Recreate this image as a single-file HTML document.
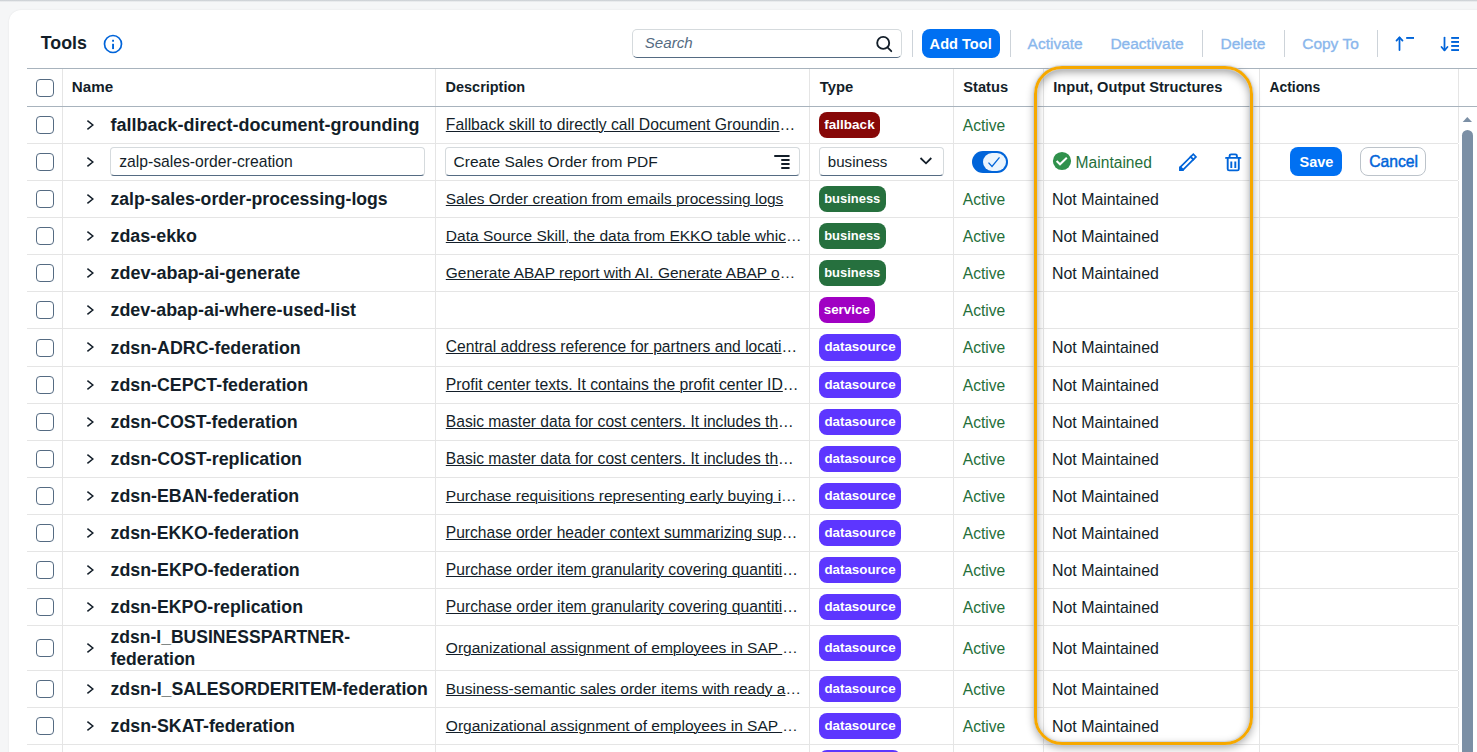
<!DOCTYPE html>
<html><head><meta charset="utf-8"><title>Tools</title>
<style>
*{box-sizing:border-box;margin:0;padding:0}
html,body{width:1477px;height:752px;overflow:hidden;background:#f5f6f7;font-family:"Liberation Sans",sans-serif;color:#131e29}
.abs{position:absolute}
.t{position:absolute;white-space:nowrap;line-height:1}
.topsh{position:absolute;left:0;top:0;width:1477px;height:2px;background:linear-gradient(#c3c8cd,rgba(245,246,247,0))}
.card{position:absolute;left:9px;top:10px;width:1500px;height:800px;background:#fff;border-radius:12px;box-shadow:0 0 2px rgba(0,0,0,.08)}
.hl{position:absolute;height:1px;background:#a8b3bd}
.rl{position:absolute;height:1px;background:#e5e5e5}
.vl{position:absolute;width:1px;background:#e5e5e5}
.cb{position:absolute;left:36px;width:18px;height:18px;border:1.25px solid #556b82;border-radius:4px;background:#fff}
.chev{position:absolute;left:85px;width:10px;height:12px}
.nm2{position:absolute;left:110.5px;font-weight:bold;line-height:22px;white-space:nowrap}
.b{font-weight:bold}
.desc u{text-decoration:underline;text-decoration-thickness:1px;text-underline-offset:1px}
.badge{position:absolute;left:819px;border-radius:8px}
.tb{color:#8ab7ec;-webkit-text-stroke:0.35px #8ab7ec}
.sep{position:absolute;top:30px;width:1px;height:27px;background:#cdd3d9}
.inp{position:absolute;border:1px solid #d5dadd;border-bottom:1px solid #556b82;border-radius:4px;background:#fff}
</style></head><body>
<div class="topsh"></div>
<div class="card"></div>
<div class="t" style="left:40.8px;top:35px;font-size:17.8px;font-weight:bold">Tools</div>
<svg class="abs" style="left:103px;top:34px" width="20" height="20" viewBox="0 0 20 20"><circle cx="10" cy="10" r="8.5" fill="none" stroke="#0064d9" stroke-width="1.7"/><rect x="9.1" y="5.8" width="1.9" height="1.9" fill="#0064d9"/><rect x="9.1" y="9.8" width="1.9" height="5.3" fill="#0064d9"/></svg>
<div class="inp" style="left:631.9px;top:29.2px;width:270px;height:28.7px;border-radius:5px"></div>
<div class="t" style="left:644.8px;top:35px;font-size:15.1px;font-style:italic;color:#556b82">Search</div>
<svg class="abs" style="left:872px;top:32px" width="24" height="24" viewBox="0 0 24 24"><circle cx="11.2" cy="10.9" r="6" fill="none" stroke="#131e29" stroke-width="1.85"/><path d="M15.5 15.4 L19.3 19.2" stroke="#131e29" stroke-width="1.8" stroke-linecap="round"/></svg>
<div class="sep" style="left:912px"></div>
<div class="abs" style="left:922px;top:29px;width:78px;height:29px;background:#0070f2;border-radius:8px"></div>
<div class="t" style="left:929.6px;top:37px;font-size:14.6px;font-weight:bold;color:#fff">Add Tool</div>
<div class="sep" style="left:1009.5px"></div>
<div class="t tb" style="left:1027.6px;top:36px;font-size:15.5px;">Activate</div>
<div class="t tb" style="left:1110.4px;top:36px;font-size:15.5px;">Deactivate</div>
<div class="sep" style="left:1202px"></div>
<div class="t tb" style="left:1220.5px;top:36px;font-size:15.5px;">Delete</div>
<div class="sep" style="left:1284px"></div>
<div class="t tb" style="left:1302.2px;top:36px;font-size:15.5px;">Copy To</div>
<div class="sep" style="left:1377px"></div>
<svg class="abs" style="left:1390px;top:30px" width="30" height="26" viewBox="1390 30 30 26"><path d="M1399.5 37.5 V50" stroke="#0064d9" stroke-width="1.75" stroke-linecap="round"/><path d="M1396.5 40.6 L1399.5 37.3 L1402.5 40.6" fill="none" stroke="#0064d9" stroke-width="1.75" stroke-linecap="round" stroke-linejoin="round"/><rect x="1406.2" y="37" width="7.8" height="1.9" fill="#0064d9"/></svg>
<svg class="abs" style="left:1436px;top:30px" width="30" height="26" viewBox="1436 30 30 26"><path d="M1444.5 37.5 V50" stroke="#0064d9" stroke-width="1.75" stroke-linecap="round"/><path d="M1441.5 47 L1444.5 50.3 L1447.5 47" fill="none" stroke="#0064d9" stroke-width="1.75" stroke-linecap="round" stroke-linejoin="round"/><rect x="1451.2" y="37" width="7.8" height="1.9" fill="#0064d9"/><rect x="1451.2" y="41" width="7.8" height="1.9" fill="#0064d9"/><rect x="1451.2" y="45" width="7.8" height="1.9" fill="#0064d9"/><rect x="1451.2" y="49.1" width="7.8" height="1.9" fill="#0064d9"/></svg>
<div class="hl" style="left:27px;top:68px;width:1450px"></div>
<div class="hl" style="left:27px;top:106px;width:1450px"></div>
<div class="vl" style="left:62px;top:69px;height:37px"></div>
<div class="vl" style="left:435px;top:69px;height:37px"></div>
<div class="vl" style="left:809px;top:69px;height:37px"></div>
<div class="vl" style="left:953px;top:69px;height:37px"></div>
<div class="vl" style="left:1043px;top:69px;height:37px"></div>
<div class="vl" style="left:1259px;top:69px;height:37px"></div>
<div class="vl" style="left:1458px;top:69px;height:37px"></div>
<div class="cb" style="top:79px"></div>
<div class="t" style="left:71.8px;top:79px;font-size:15.2px;font-weight:bold">Name</div>
<div class="t" style="left:445.6px;top:80px;font-size:14.46px;font-weight:bold">Description</div>
<div class="t" style="left:819.8px;top:80px;font-size:14.8px;font-weight:bold">Type</div>
<div class="t" style="left:963.3px;top:80px;font-size:14.65px;font-weight:bold">Status</div>
<div class="t" style="left:1053.2px;top:80px;font-size:14.65px;font-weight:bold">Input, Output Structures</div>
<div class="t" style="left:1269.4px;top:81px;font-size:13.9px;font-weight:bold">Actions</div>
<div class="rl" style="left:27px;top:143px;width:1431px"></div>
<div class="vl" style="left:62px;top:107px;height:36px"></div>
<div class="vl" style="left:435px;top:107px;height:36px"></div>
<div class="vl" style="left:809px;top:107px;height:36px"></div>
<div class="vl" style="left:953px;top:107px;height:36px"></div>
<div class="vl" style="left:1043px;top:107px;height:36px"></div>
<div class="vl" style="left:1259px;top:107px;height:36px"></div>
<div class="vl" style="left:1458px;top:107px;height:36px"></div>
<div class="cb" style="top:116.0px"></div>
<svg class="chev" style="top:118.5px" width="10" height="12" viewBox="0 0 10 12"><path d="M2.4 1.7 L7.8 6 L2.4 10.3" fill="none" stroke="#131e29" stroke-width="1.5"/></svg>
<div class="t" style="left:110.5px;top:116px;font-size:18.01182px;font-weight:bold">fallback-direct-document-grounding</div>
<div class="t desc" style="left:445.8px;top:117px;font-size:15.731100000000001px;"><u>Fallback skill to directly call Document Groundin</u>…</div>
<div class="t" style="left:962.8px;top:118px;font-size:15.6px;color:#256f3a">Active</div>
<div class="badge" style="top:111.6px;width:61px;height:26.5px;background:#870808"></div>
<div class="t" style="left:819px;width:61px;text-align:center;top:118px;font-size:13.5px;font-weight:bold;color:#fff">fallback</div>
<div class="rl" style="left:27px;top:180px;width:1431px"></div>
<div class="vl" style="left:62px;top:144px;height:36px"></div>
<div class="vl" style="left:435px;top:144px;height:36px"></div>
<div class="vl" style="left:809px;top:144px;height:36px"></div>
<div class="vl" style="left:953px;top:144px;height:36px"></div>
<div class="vl" style="left:1043px;top:144px;height:36px"></div>
<div class="vl" style="left:1259px;top:144px;height:36px"></div>
<div class="vl" style="left:1458px;top:144px;height:36px"></div>
<div class="cb" style="top:153.0px"></div>
<svg class="chev" style="top:155.5px" width="10" height="12" viewBox="0 0 10 12"><path d="M2.4 1.7 L7.8 6 L2.4 10.3" fill="none" stroke="#131e29" stroke-width="1.5"/></svg>
<div class="inp" style="left:110.4px;top:147.4px;width:315px;height:28.3px"></div>
<div class="t" style="left:119.2px;top:154px;font-size:15.7px;">zalp-sales-order-creation</div>
<div class="inp" style="left:445.3px;top:147.4px;width:354.5px;height:28.3px"></div>
<div class="t" style="left:453.6px;top:154px;font-size:15.5px;">Create Sales Order from PDF</div>
<svg class="abs" style="left:772px;top:153.0px" width="20" height="18" viewBox="0 0 20 18"><rect x="2" y="2" width="15.8" height="2" rx="1" fill="#131e29"/><rect x="9" y="6" width="8.8" height="2" rx="1" fill="#131e29"/><rect x="9" y="10" width="8.8" height="2" rx="1" fill="#131e29"/><rect x="9" y="14" width="8.8" height="2" rx="1" fill="#131e29"/></svg>
<div class="inp" style="left:819.3px;top:147.4px;width:124.5px;height:28.3px"></div>
<div class="t" style="left:827.8px;top:154px;font-size:15.1px;">business</div>
<svg class="abs" style="left:918px;top:156.0px" width="16" height="10" viewBox="0 0 16 10"><path d="M2.5 2 L8 7.3 L13.3 2" fill="none" stroke="#131e29" stroke-width="1.8"/></svg>
<svg class="abs" style="left:972px;top:151.0px" width="36" height="22" viewBox="0 0 36 22"><rect x="0" y="0" width="36" height="22" rx="11" fill="#0064d9"/><rect x="11" y="2" width="23" height="18" rx="9" fill="#ebf5fe"/><path d="M16.5 11.6 L20 15.4 L27.5 6.4" fill="none" stroke="#0064d9" stroke-width="1.3"/></svg>
<svg class="abs" style="left:1052px;top:151.0px" width="20" height="20" viewBox="0 0 20 20"><circle cx="10" cy="10" r="9.1" fill="#30914c"/><path d="M4.6 10.1 L8 13.3 L14.8 6.8" fill="none" stroke="#fff" stroke-width="2"/></svg>
<div class="t" style="left:1075.6px;top:155px;font-size:15.6px;color:#256f3a">Maintained</div>
<svg class="abs" style="left:1170px;top:148px;overflow:visible" width="34" height="28" viewBox="1170 148 34 28"><g transform="translate(1195.25 154.95) rotate(135)"><path d="M0.85 -1.9 L19.6 -1.9 L21.5 0 L19.6 1.9 L0.85 1.9 Z" fill="none" stroke="#0064d9" stroke-width="1.7"/><path d="M4.6 -2.75 V2.75" stroke="#0064d9" stroke-width="1.8"/><path d="M18.2 -2.75 L19.85 -2.75 L22.6 0 L19.85 2.75 L18.2 2.75 Z" fill="#0064d9"/></g></svg>
<svg class="abs" style="left:1224px;top:152.0px" width="18" height="20" viewBox="0 0 18 20"><path d="M2 5.9 H16.4" stroke="#0064d9" stroke-width="1.9" stroke-linecap="round"/><path d="M5.6 5.6 V3.8 Q5.6 2.4 7.1 2.4 H11.4 Q12.9 2.4 12.9 3.8 V5.6" fill="none" stroke="#0064d9" stroke-width="1.9"/><path d="M3.7 5.9 V16.9 Q3.7 18.4 5.2 18.4 H13.3 Q14.8 18.4 14.8 16.9 V5.9" fill="none" stroke="#0064d9" stroke-width="1.9"/><path d="M7.3 9.6 V15.9 M11.3 9.6 V15.9" stroke="#0064d9" stroke-width="1.9"/></svg>
<div class="abs" style="left:1290px;top:147px;width:52px;height:29px;background:#0070f2;border-radius:8px"></div>
<div class="t" style="left:1299.5px;top:155px;font-size:14.5px;font-weight:bold;color:#fff">Save</div>
<div class="abs" style="left:1360px;top:147px;width:66px;height:29px;border:1px solid #bcc3ca;border-radius:8px;background:#fff"></div>
<div class="t" style="left:1369.2px;top:154px;font-size:15.7px;color:#0064d9;-webkit-text-stroke:0.45px #0064d9">Cancel</div>
<div class="rl" style="left:27px;top:217px;width:1431px"></div>
<div class="vl" style="left:62px;top:181px;height:36px"></div>
<div class="vl" style="left:435px;top:181px;height:36px"></div>
<div class="vl" style="left:809px;top:181px;height:36px"></div>
<div class="vl" style="left:953px;top:181px;height:36px"></div>
<div class="vl" style="left:1043px;top:181px;height:36px"></div>
<div class="vl" style="left:1259px;top:181px;height:36px"></div>
<div class="vl" style="left:1458px;top:181px;height:36px"></div>
<div class="cb" style="top:190.0px"></div>
<svg class="chev" style="top:192.5px" width="10" height="12" viewBox="0 0 10 12"><path d="M2.4 1.7 L7.8 6 L2.4 10.3" fill="none" stroke="#131e29" stroke-width="1.5"/></svg>
<div class="t" style="left:110.5px;top:191px;font-size:17.6398px;font-weight:bold">zalp-sales-order-processing-logs</div>
<div class="t desc" style="left:445.8px;top:191px;font-size:15.469299999999999px;"><u>Sales Order creation from emails processing logs</u></div>
<div class="t" style="left:962.8px;top:192px;font-size:15.6px;color:#256f3a">Active</div>
<div class="t" style="left:1052px;top:192px;font-size:15.9px;">Not Maintained</div>
<div class="badge" style="top:185.6px;width:66.5px;height:26.5px;background:#26703e"></div>
<div class="t" style="left:819px;width:66.5px;text-align:center;top:193px;font-size:12.96px;font-weight:bold;color:#fff">business</div>
<div class="rl" style="left:27px;top:254px;width:1431px"></div>
<div class="vl" style="left:62px;top:218px;height:36px"></div>
<div class="vl" style="left:435px;top:218px;height:36px"></div>
<div class="vl" style="left:809px;top:218px;height:36px"></div>
<div class="vl" style="left:953px;top:218px;height:36px"></div>
<div class="vl" style="left:1043px;top:218px;height:36px"></div>
<div class="vl" style="left:1259px;top:218px;height:36px"></div>
<div class="vl" style="left:1458px;top:218px;height:36px"></div>
<div class="cb" style="top:227.0px"></div>
<svg class="chev" style="top:229.5px" width="10" height="12" viewBox="0 0 10 12"><path d="M2.4 1.7 L7.8 6 L2.4 10.3" fill="none" stroke="#131e29" stroke-width="1.5"/></svg>
<div class="t" style="left:110.5px;top:228px;font-size:17.88544px;font-weight:bold">zdas-ekko</div>
<div class="t desc" style="left:445.8px;top:228px;font-size:15.540140000000003px;"><u>Data Source Skill, the data from EKKO table whic</u>…</div>
<div class="t" style="left:962.8px;top:229px;font-size:15.6px;color:#256f3a">Active</div>
<div class="t" style="left:1052px;top:229px;font-size:15.9px;">Not Maintained</div>
<div class="badge" style="top:222.6px;width:66.5px;height:26.5px;background:#26703e"></div>
<div class="t" style="left:819px;width:66.5px;text-align:center;top:230px;font-size:12.96px;font-weight:bold;color:#fff">business</div>
<div class="rl" style="left:27px;top:291px;width:1431px"></div>
<div class="vl" style="left:62px;top:255px;height:36px"></div>
<div class="vl" style="left:435px;top:255px;height:36px"></div>
<div class="vl" style="left:809px;top:255px;height:36px"></div>
<div class="vl" style="left:953px;top:255px;height:36px"></div>
<div class="vl" style="left:1043px;top:255px;height:36px"></div>
<div class="vl" style="left:1259px;top:255px;height:36px"></div>
<div class="vl" style="left:1458px;top:255px;height:36px"></div>
<div class="cb" style="top:264.0px"></div>
<svg class="chev" style="top:266.5px" width="10" height="12" viewBox="0 0 10 12"><path d="M2.4 1.7 L7.8 6 L2.4 10.3" fill="none" stroke="#131e29" stroke-width="1.5"/></svg>
<div class="t" style="left:110.5px;top:265px;font-size:17.97266px;font-weight:bold">zdev-abap-ai-generate</div>
<div class="t desc" style="left:445.8px;top:265px;font-size:15.484700000000002px;"><u>Generate ABAP report with AI. Generate ABAP o</u>…</div>
<div class="t" style="left:962.8px;top:266px;font-size:15.6px;color:#256f3a">Active</div>
<div class="t" style="left:1052px;top:266px;font-size:15.9px;">Not Maintained</div>
<div class="badge" style="top:259.6px;width:66.5px;height:26.5px;background:#26703e"></div>
<div class="t" style="left:819px;width:66.5px;text-align:center;top:267px;font-size:12.96px;font-weight:bold;color:#fff">business</div>
<div class="rl" style="left:27px;top:328px;width:1431px"></div>
<div class="vl" style="left:62px;top:292px;height:36px"></div>
<div class="vl" style="left:435px;top:292px;height:36px"></div>
<div class="vl" style="left:809px;top:292px;height:36px"></div>
<div class="vl" style="left:953px;top:292px;height:36px"></div>
<div class="vl" style="left:1043px;top:292px;height:36px"></div>
<div class="vl" style="left:1259px;top:292px;height:36px"></div>
<div class="vl" style="left:1458px;top:292px;height:36px"></div>
<div class="cb" style="top:301.0px"></div>
<svg class="chev" style="top:303.5px" width="10" height="12" viewBox="0 0 10 12"><path d="M2.4 1.7 L7.8 6 L2.4 10.3" fill="none" stroke="#131e29" stroke-width="1.5"/></svg>
<div class="t" style="left:110.5px;top:302px;font-size:17.90324px;font-weight:bold">zdev-abap-ai-where-used-list</div>
<div class="t" style="left:962.8px;top:303px;font-size:15.6px;color:#256f3a">Active</div>
<div class="badge" style="top:296.6px;width:55.6px;height:26.5px;background:#a000c3"></div>
<div class="t" style="left:819px;width:55.6px;text-align:center;top:303px;font-size:13.4px;font-weight:bold;color:#fff">service</div>
<div class="rl" style="left:27px;top:366px;width:1431px"></div>
<div class="vl" style="left:62px;top:329px;height:37px"></div>
<div class="vl" style="left:435px;top:329px;height:37px"></div>
<div class="vl" style="left:809px;top:329px;height:37px"></div>
<div class="vl" style="left:953px;top:329px;height:37px"></div>
<div class="vl" style="left:1043px;top:329px;height:37px"></div>
<div class="vl" style="left:1259px;top:329px;height:37px"></div>
<div class="vl" style="left:1458px;top:329px;height:37px"></div>
<div class="cb" style="top:338.5px"></div>
<svg class="chev" style="top:341.0px" width="10" height="12" viewBox="0 0 10 12"><path d="M2.4 1.7 L7.8 6 L2.4 10.3" fill="none" stroke="#131e29" stroke-width="1.5"/></svg>
<div class="t" style="left:110.5px;top:340px;font-size:17.84806px;font-weight:bold">zdsn-ADRC-federation</div>
<div class="t desc" style="left:445.8px;top:339px;font-size:15.610980000000001px;"><u>Central address reference for partners and locati</u>…</div>
<div class="t" style="left:962.8px;top:340px;font-size:15.6px;color:#256f3a">Active</div>
<div class="t" style="left:1052px;top:340px;font-size:15.9px;">Not Maintained</div>
<div class="badge" style="top:334.1px;width:82px;height:26.5px;background:#5d36ff"></div>
<div class="t" style="left:819px;width:82px;text-align:center;top:340px;font-size:13.34px;font-weight:bold;color:#fff">datasource</div>
<div class="rl" style="left:27px;top:403px;width:1431px"></div>
<div class="vl" style="left:62px;top:367px;height:36px"></div>
<div class="vl" style="left:435px;top:367px;height:36px"></div>
<div class="vl" style="left:809px;top:367px;height:36px"></div>
<div class="vl" style="left:953px;top:367px;height:36px"></div>
<div class="vl" style="left:1043px;top:367px;height:36px"></div>
<div class="vl" style="left:1259px;top:367px;height:36px"></div>
<div class="vl" style="left:1458px;top:367px;height:36px"></div>
<div class="cb" style="top:376.0px"></div>
<svg class="chev" style="top:378.5px" width="10" height="12" viewBox="0 0 10 12"><path d="M2.4 1.7 L7.8 6 L2.4 10.3" fill="none" stroke="#131e29" stroke-width="1.5"/></svg>
<div class="t" style="left:110.5px;top:377px;font-size:17.8089px;font-weight:bold">zdsn-CEPCT-federation</div>
<div class="t desc" style="left:445.8px;top:377px;font-size:15.75574px;"><u>Profit center texts. It contains the profit center ID</u>…</div>
<div class="t" style="left:962.8px;top:378px;font-size:15.6px;color:#256f3a">Active</div>
<div class="t" style="left:1052px;top:378px;font-size:15.9px;">Not Maintained</div>
<div class="badge" style="top:371.6px;width:82px;height:26.5px;background:#5d36ff"></div>
<div class="t" style="left:819px;width:82px;text-align:center;top:378px;font-size:13.34px;font-weight:bold;color:#fff">datasource</div>
<div class="rl" style="left:27px;top:440px;width:1431px"></div>
<div class="vl" style="left:62px;top:404px;height:36px"></div>
<div class="vl" style="left:435px;top:404px;height:36px"></div>
<div class="vl" style="left:809px;top:404px;height:36px"></div>
<div class="vl" style="left:953px;top:404px;height:36px"></div>
<div class="vl" style="left:1043px;top:404px;height:36px"></div>
<div class="vl" style="left:1259px;top:404px;height:36px"></div>
<div class="vl" style="left:1458px;top:404px;height:36px"></div>
<div class="cb" style="top:413.0px"></div>
<svg class="chev" style="top:415.5px" width="10" height="12" viewBox="0 0 10 12"><path d="M2.4 1.7 L7.8 6 L2.4 10.3" fill="none" stroke="#131e29" stroke-width="1.5"/></svg>
<div class="t" style="left:110.5px;top:414px;font-size:17.84806px;font-weight:bold">zdsn-COST-federation</div>
<div class="t desc" style="left:445.8px;top:414px;font-size:15.612520000000002px;"><u>Basic master data for cost centers. It includes th</u>…</div>
<div class="t" style="left:962.8px;top:415px;font-size:15.6px;color:#256f3a">Active</div>
<div class="t" style="left:1052px;top:415px;font-size:15.9px;">Not Maintained</div>
<div class="badge" style="top:408.6px;width:82px;height:26.5px;background:#5d36ff"></div>
<div class="t" style="left:819px;width:82px;text-align:center;top:415px;font-size:13.34px;font-weight:bold;color:#fff">datasource</div>
<div class="rl" style="left:27px;top:477px;width:1431px"></div>
<div class="vl" style="left:62px;top:441px;height:36px"></div>
<div class="vl" style="left:435px;top:441px;height:36px"></div>
<div class="vl" style="left:809px;top:441px;height:36px"></div>
<div class="vl" style="left:953px;top:441px;height:36px"></div>
<div class="vl" style="left:1043px;top:441px;height:36px"></div>
<div class="vl" style="left:1259px;top:441px;height:36px"></div>
<div class="vl" style="left:1458px;top:441px;height:36px"></div>
<div class="cb" style="top:450.0px"></div>
<svg class="chev" style="top:452.5px" width="10" height="12" viewBox="0 0 10 12"><path d="M2.4 1.7 L7.8 6 L2.4 10.3" fill="none" stroke="#131e29" stroke-width="1.5"/></svg>
<div class="t" style="left:110.5px;top:451px;font-size:17.86586px;font-weight:bold">zdsn-COST-replication</div>
<div class="t desc" style="left:445.8px;top:451px;font-size:15.612520000000002px;"><u>Basic master data for cost centers. It includes th</u>…</div>
<div class="t" style="left:962.8px;top:452px;font-size:15.6px;color:#256f3a">Active</div>
<div class="t" style="left:1052px;top:452px;font-size:15.9px;">Not Maintained</div>
<div class="badge" style="top:445.6px;width:82px;height:26.5px;background:#5d36ff"></div>
<div class="t" style="left:819px;width:82px;text-align:center;top:452px;font-size:13.34px;font-weight:bold;color:#fff">datasource</div>
<div class="rl" style="left:27px;top:514px;width:1431px"></div>
<div class="vl" style="left:62px;top:478px;height:36px"></div>
<div class="vl" style="left:435px;top:478px;height:36px"></div>
<div class="vl" style="left:809px;top:478px;height:36px"></div>
<div class="vl" style="left:953px;top:478px;height:36px"></div>
<div class="vl" style="left:1043px;top:478px;height:36px"></div>
<div class="vl" style="left:1259px;top:478px;height:36px"></div>
<div class="vl" style="left:1458px;top:478px;height:36px"></div>
<div class="cb" style="top:487.0px"></div>
<svg class="chev" style="top:489.5px" width="10" height="12" viewBox="0 0 10 12"><path d="M2.4 1.7 L7.8 6 L2.4 10.3" fill="none" stroke="#131e29" stroke-width="1.5"/></svg>
<div class="t" style="left:110.5px;top:488px;font-size:17.7911px;font-weight:bold">zdsn-EBAN-federation</div>
<div class="t desc" style="left:445.8px;top:488px;font-size:15.56016px;"><u>Purchase requisitions representing early buying i</u>…</div>
<div class="t" style="left:962.8px;top:489px;font-size:15.6px;color:#256f3a">Active</div>
<div class="t" style="left:1052px;top:489px;font-size:15.9px;">Not Maintained</div>
<div class="badge" style="top:482.6px;width:82px;height:26.5px;background:#5d36ff"></div>
<div class="t" style="left:819px;width:82px;text-align:center;top:489px;font-size:13.34px;font-weight:bold;color:#fff">datasource</div>
<div class="rl" style="left:27px;top:551px;width:1431px"></div>
<div class="vl" style="left:62px;top:515px;height:36px"></div>
<div class="vl" style="left:435px;top:515px;height:36px"></div>
<div class="vl" style="left:809px;top:515px;height:36px"></div>
<div class="vl" style="left:953px;top:515px;height:36px"></div>
<div class="vl" style="left:1043px;top:515px;height:36px"></div>
<div class="vl" style="left:1259px;top:515px;height:36px"></div>
<div class="vl" style="left:1458px;top:515px;height:36px"></div>
<div class="cb" style="top:524.0px"></div>
<svg class="chev" style="top:526.5px" width="10" height="12" viewBox="0 0 10 12"><path d="M2.4 1.7 L7.8 6 L2.4 10.3" fill="none" stroke="#131e29" stroke-width="1.5"/></svg>
<div class="t" style="left:110.5px;top:525px;font-size:17.69498px;font-weight:bold">zdsn-EKKO-federation</div>
<div class="t desc" style="left:445.8px;top:525px;font-size:15.5925px;"><u>Purchase order header context summarizing sup</u>…</div>
<div class="t" style="left:962.8px;top:526px;font-size:15.6px;color:#256f3a">Active</div>
<div class="t" style="left:1052px;top:526px;font-size:15.9px;">Not Maintained</div>
<div class="badge" style="top:519.6px;width:82px;height:26.5px;background:#5d36ff"></div>
<div class="t" style="left:819px;width:82px;text-align:center;top:526px;font-size:13.34px;font-weight:bold;color:#fff">datasource</div>
<div class="rl" style="left:27px;top:588px;width:1431px"></div>
<div class="vl" style="left:62px;top:552px;height:36px"></div>
<div class="vl" style="left:435px;top:552px;height:36px"></div>
<div class="vl" style="left:809px;top:552px;height:36px"></div>
<div class="vl" style="left:953px;top:552px;height:36px"></div>
<div class="vl" style="left:1043px;top:552px;height:36px"></div>
<div class="vl" style="left:1259px;top:552px;height:36px"></div>
<div class="vl" style="left:1458px;top:552px;height:36px"></div>
<div class="cb" style="top:561.0px"></div>
<svg class="chev" style="top:563.5px" width="10" height="12" viewBox="0 0 10 12"><path d="M2.4 1.7 L7.8 6 L2.4 10.3" fill="none" stroke="#131e29" stroke-width="1.5"/></svg>
<div class="t" style="left:110.5px;top:562px;font-size:17.83738px;font-weight:bold">zdsn-EKPO-federation</div>
<div class="t desc" style="left:445.8px;top:562px;font-size:15.65564px;"><u>Purchase order item granularity covering quantiti</u>…</div>
<div class="t" style="left:962.8px;top:563px;font-size:15.6px;color:#256f3a">Active</div>
<div class="t" style="left:1052px;top:563px;font-size:15.9px;">Not Maintained</div>
<div class="badge" style="top:556.6px;width:82px;height:26.5px;background:#5d36ff"></div>
<div class="t" style="left:819px;width:82px;text-align:center;top:563px;font-size:13.34px;font-weight:bold;color:#fff">datasource</div>
<div class="rl" style="left:27px;top:625px;width:1431px"></div>
<div class="vl" style="left:62px;top:589px;height:36px"></div>
<div class="vl" style="left:435px;top:589px;height:36px"></div>
<div class="vl" style="left:809px;top:589px;height:36px"></div>
<div class="vl" style="left:953px;top:589px;height:36px"></div>
<div class="vl" style="left:1043px;top:589px;height:36px"></div>
<div class="vl" style="left:1259px;top:589px;height:36px"></div>
<div class="vl" style="left:1458px;top:589px;height:36px"></div>
<div class="cb" style="top:598.0px"></div>
<svg class="chev" style="top:600.5px" width="10" height="12" viewBox="0 0 10 12"><path d="M2.4 1.7 L7.8 6 L2.4 10.3" fill="none" stroke="#131e29" stroke-width="1.5"/></svg>
<div class="t" style="left:110.5px;top:599px;font-size:17.7822px;font-weight:bold">zdsn-EKPO-replication</div>
<div class="t desc" style="left:445.8px;top:599px;font-size:15.65564px;"><u>Purchase order item granularity covering quantiti</u>…</div>
<div class="t" style="left:962.8px;top:600px;font-size:15.6px;color:#256f3a">Active</div>
<div class="t" style="left:1052px;top:600px;font-size:15.9px;">Not Maintained</div>
<div class="badge" style="top:593.6px;width:82px;height:26.5px;background:#5d36ff"></div>
<div class="t" style="left:819px;width:82px;text-align:center;top:600px;font-size:13.34px;font-weight:bold;color:#fff">datasource</div>
<div class="rl" style="left:27px;top:670px;width:1431px"></div>
<div class="vl" style="left:62px;top:626px;height:44px"></div>
<div class="vl" style="left:435px;top:626px;height:44px"></div>
<div class="vl" style="left:809px;top:626px;height:44px"></div>
<div class="vl" style="left:953px;top:626px;height:44px"></div>
<div class="vl" style="left:1043px;top:626px;height:44px"></div>
<div class="vl" style="left:1259px;top:626px;height:44px"></div>
<div class="vl" style="left:1458px;top:626px;height:44px"></div>
<div class="cb" style="top:639.0px"></div>
<svg class="chev" style="top:641.5px" width="10" height="12" viewBox="0 0 10 12"><path d="M2.4 1.7 L7.8 6 L2.4 10.3" fill="none" stroke="#131e29" stroke-width="1.5"/></svg>
<div class="t" style="left:110.5px;top:629px;font-size:17.56326px;font-weight:bold">zdsn-I_BUSINESSPARTNER-</div>
<div class="t" style="left:110.5px;top:651px;font-size:17.56326px;font-weight:bold">federation</div>
<div class="t desc" style="left:445.8px;top:640px;font-size:15.546300000000002px;"><u>Organizational assignment of employees in SAP </u>…</div>
<div class="t" style="left:962.8px;top:641px;font-size:15.6px;color:#256f3a">Active</div>
<div class="t" style="left:1052px;top:641px;font-size:15.9px;">Not Maintained</div>
<div class="badge" style="top:634.6px;width:82px;height:26.5px;background:#5d36ff"></div>
<div class="t" style="left:819px;width:82px;text-align:center;top:641px;font-size:13.34px;font-weight:bold;color:#fff">datasource</div>
<div class="rl" style="left:27px;top:707px;width:1431px"></div>
<div class="vl" style="left:62px;top:671px;height:36px"></div>
<div class="vl" style="left:435px;top:671px;height:36px"></div>
<div class="vl" style="left:809px;top:671px;height:36px"></div>
<div class="vl" style="left:953px;top:671px;height:36px"></div>
<div class="vl" style="left:1043px;top:671px;height:36px"></div>
<div class="vl" style="left:1259px;top:671px;height:36px"></div>
<div class="vl" style="left:1458px;top:671px;height:36px"></div>
<div class="cb" style="top:680.0px"></div>
<svg class="chev" style="top:682.5px" width="10" height="12" viewBox="0 0 10 12"><path d="M2.4 1.7 L7.8 6 L2.4 10.3" fill="none" stroke="#131e29" stroke-width="1.5"/></svg>
<div class="t" style="left:110.5px;top:681px;font-size:17.6932px;font-weight:bold">zdsn-I_SALESORDERITEM-federation</div>
<div class="t desc" style="left:445.8px;top:681px;font-size:15.483160000000002px;"><u>Business-semantic sales order items with ready a</u>…</div>
<div class="t" style="left:962.8px;top:682px;font-size:15.6px;color:#256f3a">Active</div>
<div class="t" style="left:1052px;top:682px;font-size:15.9px;">Not Maintained</div>
<div class="badge" style="top:675.6px;width:82px;height:26.5px;background:#5d36ff"></div>
<div class="t" style="left:819px;width:82px;text-align:center;top:682px;font-size:13.34px;font-weight:bold;color:#fff">datasource</div>
<div class="rl" style="left:27px;top:744px;width:1431px"></div>
<div class="vl" style="left:62px;top:708px;height:36px"></div>
<div class="vl" style="left:435px;top:708px;height:36px"></div>
<div class="vl" style="left:809px;top:708px;height:36px"></div>
<div class="vl" style="left:953px;top:708px;height:36px"></div>
<div class="vl" style="left:1043px;top:708px;height:36px"></div>
<div class="vl" style="left:1259px;top:708px;height:36px"></div>
<div class="vl" style="left:1458px;top:708px;height:36px"></div>
<div class="cb" style="top:717.0px"></div>
<svg class="chev" style="top:719.5px" width="10" height="12" viewBox="0 0 10 12"><path d="M2.4 1.7 L7.8 6 L2.4 10.3" fill="none" stroke="#131e29" stroke-width="1.5"/></svg>
<div class="t" style="left:110.5px;top:718px;font-size:17.7911px;font-weight:bold">zdsn-SKAT-federation</div>
<div class="t desc" style="left:445.8px;top:718px;font-size:15.546300000000002px;"><u>Organizational assignment of employees in SAP </u>…</div>
<div class="t" style="left:962.8px;top:719px;font-size:15.6px;color:#256f3a">Active</div>
<div class="t" style="left:1052px;top:719px;font-size:15.9px;">Not Maintained</div>
<div class="badge" style="top:712.6px;width:82px;height:26.5px;background:#5d36ff"></div>
<div class="t" style="left:819px;width:82px;text-align:center;top:719px;font-size:13.34px;font-weight:bold;color:#fff">datasource</div>
<div class="rl" style="left:27px;top:781px;width:1431px"></div>
<div class="vl" style="left:62px;top:745px;height:36px"></div>
<div class="vl" style="left:435px;top:745px;height:36px"></div>
<div class="vl" style="left:809px;top:745px;height:36px"></div>
<div class="vl" style="left:953px;top:745px;height:36px"></div>
<div class="vl" style="left:1043px;top:745px;height:36px"></div>
<div class="vl" style="left:1259px;top:745px;height:36px"></div>
<div class="vl" style="left:1458px;top:745px;height:36px"></div>
<div class="cb" style="top:754.0px"></div>
<svg class="chev" style="top:756.5px" width="10" height="12" viewBox="0 0 10 12"><path d="M2.4 1.7 L7.8 6 L2.4 10.3" fill="none" stroke="#131e29" stroke-width="1.5"/></svg>
<div class="t" style="left:110.5px;top:755px;font-size:17.8px;font-weight:bold">zdsn-X</div>
<div class="t" style="left:962.8px;top:756px;font-size:15.6px;color:#256f3a">Active</div>
<div class="badge" style="top:749.6px;width:82px;height:26.5px;background:#5d36ff"></div>
<div class="t" style="left:819px;width:82px;text-align:center;top:756px;font-size:13.34px;font-weight:bold;color:#fff">datasource</div>
<svg class="abs" style="left:1460px;top:114px" width="14" height="10" viewBox="0 0 14 10"><path d="M2.7 8 L7.3 3 L12 8 Z" fill="#7b8fa5"/></svg>
<div class="abs" style="left:1462px;top:130px;width:11px;height:700px;background:#7b8fa5;border-radius:5.5px"></div>
<div class="abs" style="left:1034px;top:66px;width:219px;height:679px;border:3.2px solid #f6a800;border-radius:28px;box-shadow:0 0 0 1px rgba(190,202,218,.55), 0 3px 8px rgba(0,0,0,.33), inset 0 0 0 1px rgba(190,202,218,.55), inset 0 3px 8px rgba(0,0,0,.38)"></div>
</body></html>
